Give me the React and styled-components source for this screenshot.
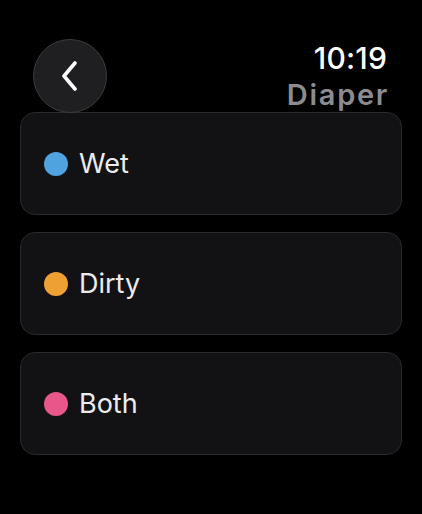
import React from 'react';
import styled, { createGlobalStyle } from 'styled-components';

const GlobalStyle = createGlobalStyle`
  html, body {
    margin: 0;
    padding: 0;
    background: #000;
  }
  body {
    font-family: Inter, "Noto Sans", "Liberation Sans", sans-serif;
    -webkit-font-smoothing: antialiased;
  }
`;

const Screen = styled.div`
  width: 422px;
  height: 514px;
  background: #000;
  padding: 39px 20px 0;
  box-sizing: border-box;
  display: flex;
  flex-direction: column;
`;

const Header = styled.header`
  position: relative;
  z-index: 1;
  height: 74px;
  display: flex;
  justify-content: space-between;
  align-items: flex-start;
  padding: 0 15px 0 13px;
  margin-bottom: -1px;
`;

const BackButton = styled.button`
  width: 74px;
  height: 74px;
  border-radius: 50%;
  background: #1f1f21;
  border: 1.5px solid #3c3c3e;
  display: flex;
  align-items: center;
  justify-content: center;
  padding: 0;
  cursor: pointer;
  box-sizing: border-box;
`;

const TitleBlock = styled.div`
  display: flex;
  flex-direction: column;
  align-items: flex-end;
  padding-top: 1px;
`;

const Time = styled.div`
  color: #fff;
  font-size: 30px;
  font-weight: 500;
  line-height: 36px;
  letter-spacing: 0.2px;
`;

const Title = styled.div`
  color: #8c8c90;
  font-size: 29px;
  font-weight: 600;
  line-height: 28px;
  letter-spacing: 1.7px;
  margin-top: 5px;
  margin-right: -2px;
`;

const List = styled.div`
  display: flex;
  flex-direction: column;
  gap: 17px;
`;

const Option = styled.button`
  height: 103px;
  width: 100%;
  background: #121214;
  border: 1px solid #2a2a2c;
  border-radius: 15px;
  display: flex;
  align-items: center;
  gap: 11px;
  padding: 0 0 0 23px;
  box-sizing: border-box;
  cursor: pointer;
  font-family: inherit;
`;

const Dot = styled.span`
  width: 24px;
  height: 24px;
  border-radius: 50%;
  background: ${(p) => p.$color};
  flex-shrink: 0;
`;

const Label = styled.span`
  color: #ececee;
  font-size: 27px;
  font-weight: 400;
  line-height: 1;
`;

const options = [
  { label: 'Wet', color: '#4fa3df' },
  { label: 'Dirty', color: '#efa033' },
  { label: 'Both', color: '#e9578a' },
];

const App = () => (
  <>
    <GlobalStyle />
    <Screen>
      <Header>
        <BackButton aria-label="Back">
          <svg width="20" height="30" viewBox="0 0 20 30" fill="none">
            <path
              d="M15 2 L4 15 L15 28"
              stroke="#fff"
              strokeWidth="3.6"
              strokeLinecap="round"
              strokeLinejoin="round"
            />
          </svg>
        </BackButton>
        <TitleBlock>
          <Time>10:19</Time>
          <Title>Diaper</Title>
        </TitleBlock>
      </Header>
      <List>
        {options.map((o) => (
          <Option key={o.label}>
            <Dot $color={o.color} />
            <Label>{o.label}</Label>
          </Option>
        ))}
      </List>
    </Screen>
  </>
);

export default App;
